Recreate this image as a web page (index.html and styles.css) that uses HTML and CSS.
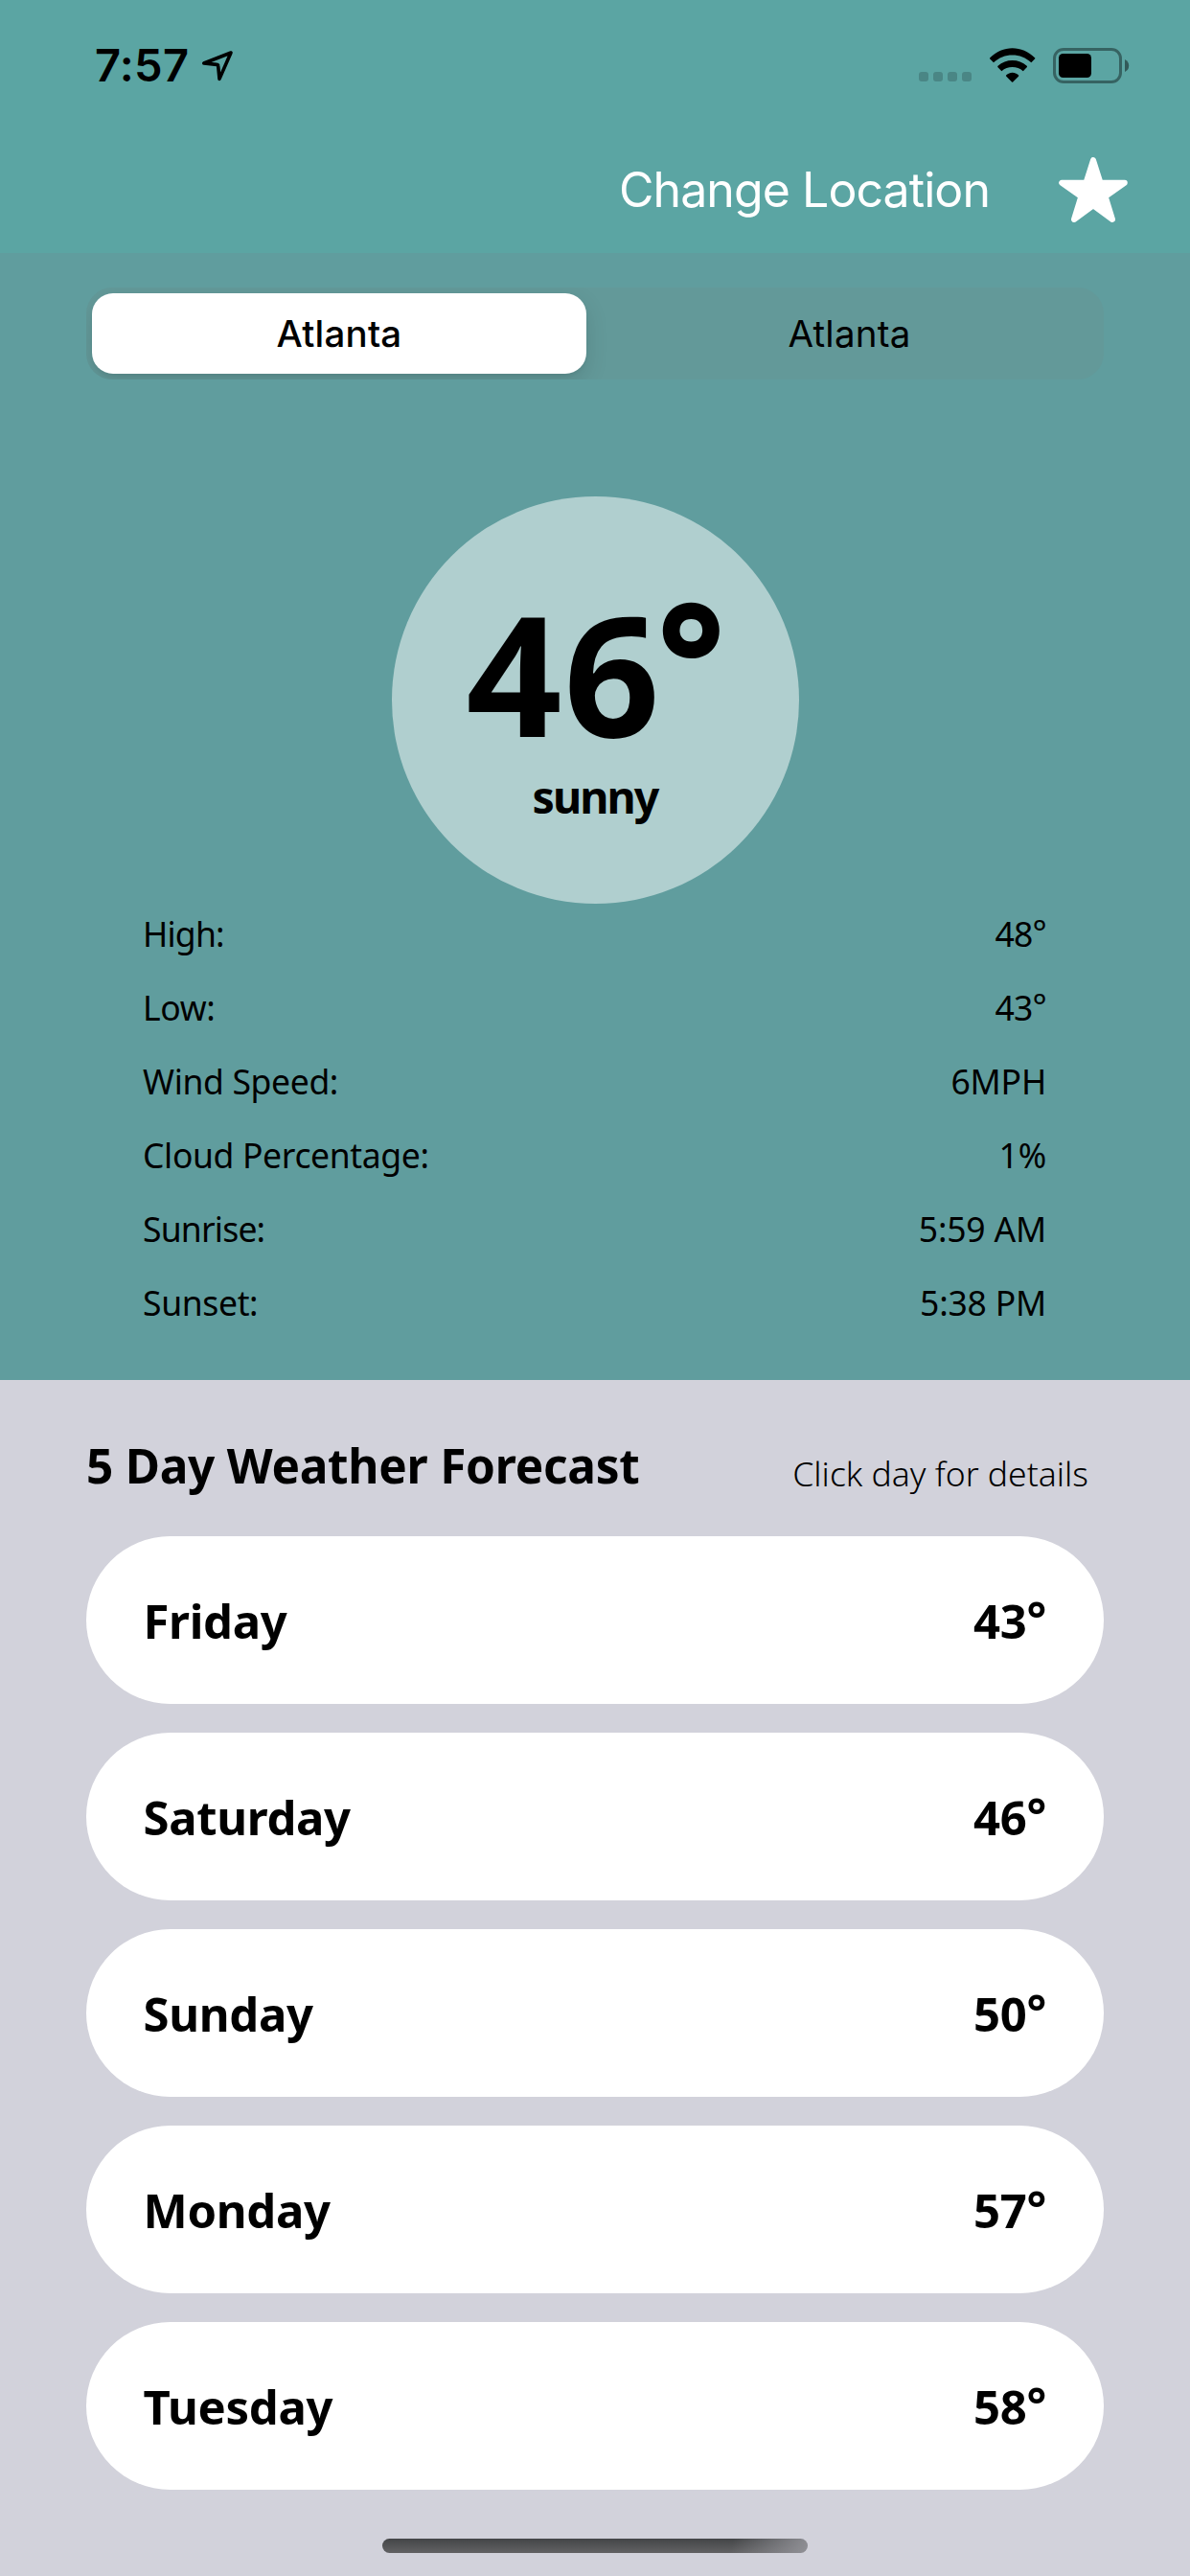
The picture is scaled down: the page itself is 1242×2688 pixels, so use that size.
FILE: index.html
```html
<!DOCTYPE html>
<html lang="en">
<head>
<meta charset="utf-8">
<title>Weather</title>
<link rel="stylesheet" href="styles.css">
</head>
<body>
<header class="header">
  <div class="status">
    <div class="status-left">
      <span class="time">7:57</span>
      <svg class="arrow" width="34" height="33" viewBox="0 0 34 33"><path d="M31 3 2.8 14l13.4 1.4q1.4.1 1.5 1.5L19 30.4z" fill="none" stroke="#000" stroke-width="3.6" stroke-linejoin="round"/></svg>
    </div>
    <div class="status-right">
      <div class="signal"><i></i><i></i><i></i><i></i></div>
      <svg class="wifi" width="48" height="37" viewBox="0 0 48 37">
        <path d="M.3 10.2C6.900 3.700 15 .2 23.600.2S40.400 3.700 47 10.200Q47.700 10.900 47 11.600L43.300 15.200C37.700 10 31 7.400 23.600 7.400S9.600 10 4 15.200L.3 11.600Q-.4 10.900.3 10.200Z"/>
        <path d="M8.500 18.800C12.800 14.800 18 12.900 23.600 12.900S34.500 14.800 38.700 18.800Q39.400 19.500 38.700 20.200L34.800 24.300C31.600 21.300 27.800 20 23.600 20S15.600 21.300 12.400 24.300L8.500 20.200Q7.800 19.500 8.500 18.800Z"/>
        <path d="M17.300 28.300C21 24.800 26.300 24.800 30 28.300Q30.600 29 30 29.700L24.200 35.600Q23.600 36.100 23 35.600L17.300 29.700Q16.600 29 17.300 28.300Z"/>
      </svg>
      <svg class="battery" width="80" height="37" viewBox="0 0 80 37">
        <rect x="1.500" y="1.500" width="69" height="34" rx="9.500" fill="none" stroke="#000" stroke-opacity=".4" stroke-width="3"/>
        <rect x="6" y="6" width="34" height="25" rx="4.500"/>
        <path d="M75 12q4.200 2 4.200 6.500T75 25z" fill-opacity=".45"/>
      </svg>
    </div>
  </div>
  <nav class="nav">
    <span class="change">Change Location</span>
    <svg width="72" height="68" viewBox="0 0 72 68"><path d="M36 3.200 43.500 26.700H68.800L48.600 41 56 65 36 50.400 16 65 23.400 41 3.200 26.700H28.500Z" fill="#fff" stroke="#fff" stroke-width="6" stroke-linejoin="round"/></svg>
  </nav>
</header>
<main class="current">
  <div class="segments">
    <div class="segment selected">Atlanta</div>
    <div class="segment">Atlanta</div>
  </div>
  <div class="circle">
    <div class="temp">46<span class="degree">°</span></div>
    <div class="condition">sunny</div>
  </div>
  <dl class="details">
    <div class="row"><dt class="tight">High:</dt><dd class="tight">48<span class="deg">°</span></dd></div>
    <div class="row"><dt>Low:</dt><dd class="tight">43<span class="deg">°</span></dd></div>
    <div class="row"><dt>Wind Speed:</dt><dd>6MPH</dd></div>
    <div class="row"><dt>Cloud Percentage:</dt><dd>1%</dd></div>
    <div class="row"><dt class="tight">Sunrise:</dt><dd>5:59 AM</dd></div>
    <div class="row"><dt>Sunset:</dt><dd>5:38 PM</dd></div>
  </dl>
</main>
<section class="forecast">
  <div class="heading">
    <h2 class="title">5 Day Weather Forecast</h2>
    <span class="hint">Click day for details</span>
  </div>
  <div class="days">
    <div class="day"><span>Friday</span><span>43<span class="deg">°</span></span></div>
    <div class="day"><span>Saturday</span><span>46<span class="deg">°</span></span></div>
    <div class="day"><span>Sunday</span><span>50<span class="deg">°</span></span></div>
    <div class="day"><span>Monday</span><span>57<span class="deg">°</span></span></div>
    <div class="day"><span>Tuesday</span><span>58<span class="deg">°</span></span></div>
  </div>
  <div class="home"></div>
</section>
</body>
</html>
```
FILE: styles.css
```css
* { box-sizing: border-box; }
body {
  margin: 0;
  width: 1242px;
  height: 2688px;
  display: flex;
  flex-direction: column;
  overflow: hidden;
  color: #000;
  background: #d2d2db;
  font-family: "Noto Sans", "Open Sans", sans-serif;
}
svg { display: block; flex: none; }

/* Status bar and navigation */
.header {
  height: 264px;
  background: #5ba5a3;
  font-family: Inter, "Liberation Sans", sans-serif;
}
.status {
  height: 132px;
  padding: 4px 63px 0 99px;
  display: flex;
  align-items: center;
  justify-content: space-between;
}
.status-left, .status-right { display: flex; align-items: center; }
.time { font-size: 47px; font-weight: 600; line-height: 60px; letter-spacing: .3px; }
.arrow { margin-left: 13px; }
.signal { display: flex; gap: 5px; margin: 24px 19px 0 0; }
.signal i { width: 10px; height: 10px; border-radius: 3px; background: #4a8685; }
.wifi { margin-right: 18px; }
.nav {
  height: 132px;
  padding-right: 65px;
  display: flex;
  align-items: center;
  justify-content: flex-end;
  gap: 72px;
}
.change { font-size: 50px; line-height: 60px; letter-spacing: -.93px; color: #fff; }

/* Current conditions */
.current {
  height: 1176px;
  padding: 36px 90px 0;
  display: flex;
  flex-direction: column;
  background: #609d9e;
}
.segments {
  height: 96px;
  flex: none;
  display: grid;
  grid-template-columns: 1fr 1fr;
  border-radius: 27px;
  overflow: hidden;
  background: #639999;
  font: 400 38.5px/84px Inter, "Liberation Sans", sans-serif;
  letter-spacing: .2px;
  text-align: center;
}
.segment { margin: 6px 0; }
.segment.selected {
  margin: 6px 9px 6px 6px;
  border-radius: 22px;
  background: #fff;
  font-weight: 500;
  box-shadow: 0 9px 24px rgba(0, 0, 0, .12), 0 3px 3px rgba(0, 0, 0, .04);
}
.circle {
  width: 425px;
  height: 425px;
  flex: none;
  margin: 122px auto 0;
  padding-top: 83px;
  border-radius: 50%;
  background: #b0cfcf;
}
.temp {
  padding-left: 78px;
  font-size: 175px;
  font-weight: 700;
  line-height: 200px;
  letter-spacing: 2px;
  white-space: nowrap;
}
.degree { margin-left: -5px; font-size: 168px; font-weight: 800; line-height: 0; vertical-align: 19px; }
.condition {
  font-size: 46.5px;
  font-weight: 700;
  line-height: 60px;
  letter-spacing: -1.9px;
  text-align: center;
}
.details { margin: -7px 0 0; padding: 0 60px 0 59px; }
.row {
  display: flex;
  justify-content: space-between;
  font-size: 35.5px;
  line-height: 77px;
}
.row dt { letter-spacing: -.35px; }
.row dd { margin: 0; letter-spacing: -.2px; }
.row .tight { letter-spacing: -.8px; }
.deg { line-height: 0; vertical-align: .07em; }

/* Forecast */
.forecast { height: 1248px; padding: 59px 90px 0; }
.heading {
  height: 104px;
  padding-right: 16px;
  display: flex;
  justify-content: space-between;
  line-height: 60px;
}
.title { margin: 0; font-size: 49.5px; font-weight: 700; letter-spacing: -.24px; }
.hint { margin-top: 8px; font-size: 35.5px; font-weight: 300; }
.days { display: flex; flex-direction: column; gap: 30px; }
.day {
  height: 175px;
  padding: 0 60px 0 59.5px;
  display: flex;
  align-items: center;
  justify-content: space-between;
  border-radius: 88px;
  background: #fff;
  font-size: 49px;
  font-weight: 700;
  line-height: 60px;
  letter-spacing: -.3px;
}
.home {
  width: 444px;
  height: 15px;
  margin: 51px auto 0;
  border-radius: 8px;
  background:
    linear-gradient(100deg, transparent 82%, rgba(150, 150, 156, .9) 100%),
    linear-gradient(#434547, #626264);
}
```
